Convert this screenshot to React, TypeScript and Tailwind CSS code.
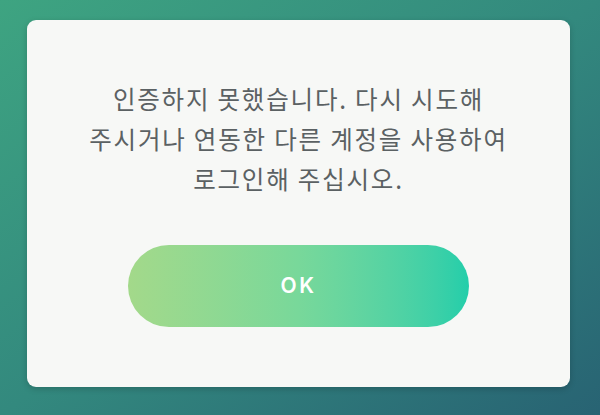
import React from 'react';

const message = ['인증하지 못했습니다. 다시 시도해', '주시거나 연동한 다른 계정을 사용하여', '로그인해 주십시오.'];

export default function App() {
  return (
    <div className="w-[600px] h-[415px] overflow-hidden bg-linear-to-br from-[#3ea481] via-[#33897e] to-[#286373] pt-[20px] pl-[27px]">
      {/* dialog card */}
      <div className="w-[543px] h-[367px] rounded-[9px] bg-[#f7f8f6] shadow-[0_2px_6px_rgba(0,0,0,0.18)] flex flex-col items-center pt-[59px]">
        <div className="text-center text-[#5b6163] text-[24.5px] leading-[40px] tracking-[1.8px] font-['Noto_Sans_CJK_KR',sans-serif]">
          {message.map((line) => (
            <p key={line}>{line}</p>
          ))}
        </div>
        <button className="mt-[46px] w-[341px] h-[82px] rounded-full bg-linear-to-r from-[#a3d98a] via-[#78d89a] to-[#22ceaa] text-white text-[21px] font-semibold tracking-[0.12em] font-['Inter',sans-serif]">
          OK
        </button>
      </div>
    </div>
  );
}
